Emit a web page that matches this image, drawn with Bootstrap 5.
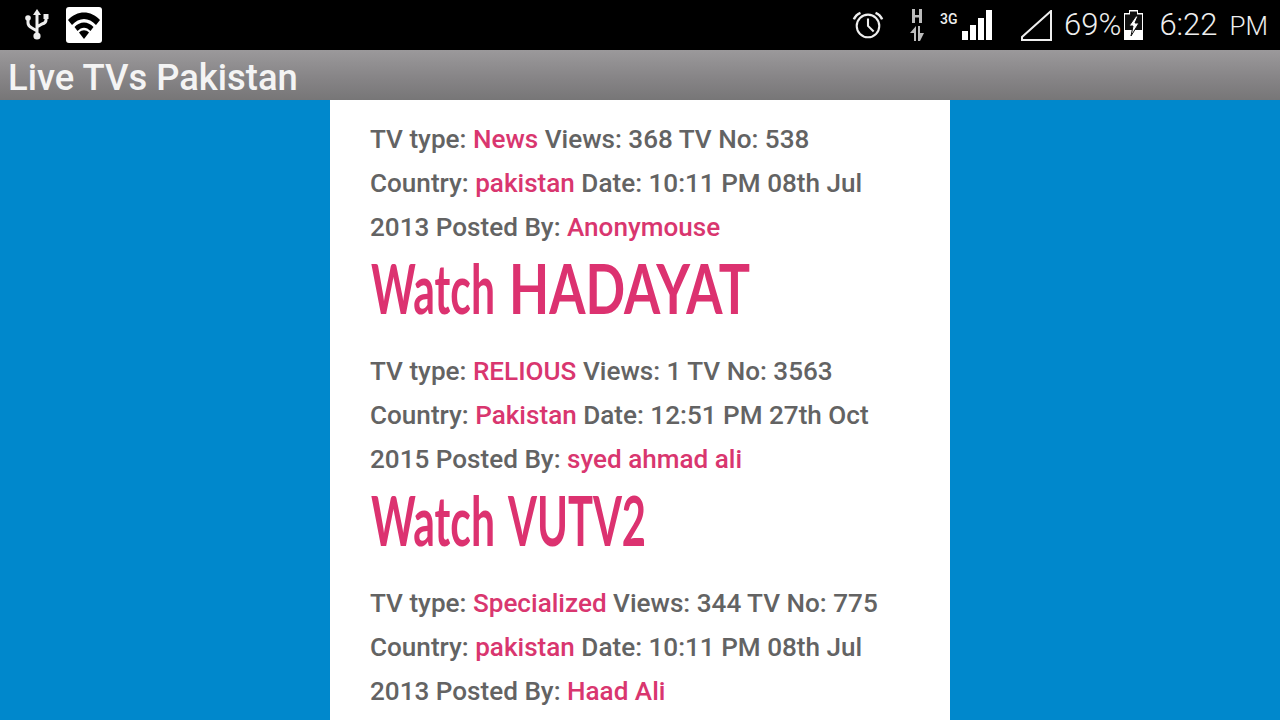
<!DOCTYPE html>
<html lang="en">
<head>
<meta charset="utf-8">
<title>Live TVs Pakistan</title>
<link href="https://cdn.jsdelivr.net/npm/bootstrap@5.3.0/dist/css/bootstrap.min.css" rel="stylesheet">
<style>
html,body{height:720px;overflow:hidden;margin:0;background:#0088cc;font-family:Roboto,"Liberation Sans",sans-serif}
.sbar{height:50px;background:#000;color:#eee;padding:0 12px 0 25px}
.sbar svg{display:block;flex:none}
.stxt{font-weight:300;font-size:31px;line-height:52px;white-space:nowrap}
.stxt small{font-size:26px;font-weight:300;margin-left:12px}
.tbar{height:50px;background:linear-gradient(#9b999b,#858385 60%,#777677);color:#f4f4f4;font-size:36.4px;font-weight:500;line-height:55px;padding-left:8px;white-space:nowrap}
.stage{height:620px;overflow:hidden;background:#0088cc}
.sheet{width:620px;height:620px;background:#fff;padding:17px 40px 0;color:#636363;font-size:26.1px;font-weight:500;line-height:44px}
.sheet p{margin:0;height:132px}
.sheet a{color:#d9366f;text-decoration:none}
.wname{height:100px;margin:0}
.wname svg{display:block}
.wname text{fill:#dc3270;font-family:Lato,"Liberation Sans",sans-serif;font-size:68px;font-weight:700}
.gap-3g{margin-left:16px}
.gap-h{margin-left:26px}
.gap-tri{margin-left:29px}
.gap-time{margin-left:15px}
.gap-pct{margin-left:12px}
.gap-batt{margin-left:2px}
.gap-wifi{margin-left:17px}
</style>
</head>
<body>
<header class="sbar d-flex align-items-center">
  <svg width="24" height="32" viewBox="0 0 24 32" fill="none" stroke="#eee" stroke-width="3"><path d="M12 4V26M3 10v4q0 3 4 5l5 3M21 8v3q0 3-4 4l-5 3"/><path d="M12 0l-4 6h8z" fill="#eee" stroke="none"/><circle cx="12" cy="27" r="3.6" fill="#eee" stroke="none"/><circle cx="3" cy="9" r="2.8" fill="#eee" stroke="none"/><rect x="18.5" y="5" width="5" height="5" fill="#eee" stroke="none"/></svg>
  <svg class="gap-wifi" width="36" height="36" viewBox="0 0 36 36"><rect width="36" height="36" rx="3" fill="#fff"/><path d="M2 13C11 3 25 3 34 13L30 18C23 10 13 10 6 18Z" fill="#000"/><path d="M8.500 20C14 14 22 14 27.500 20L24.500 24C20.500 19.500 15.500 19.500 11.500 24Z" fill="#000"/><path d="M13 25.500C16 22.500 20 22.500 23 25.500L18 32Z" fill="#000"/></svg>
  <div class="d-flex align-items-center ms-auto">
    <svg width="32" height="30" viewBox="0 0 34 30" fill="none" stroke="#eee" stroke-width="2.200"><circle cx="17" cy="16" r="12"/><path d="M17 8v8l6 6"/><path d="M2 9q2-5 7-7M32 9q-2-5-7-7" stroke-width="2.600"/></svg>
    <svg class="gap-h" width="14" height="34" viewBox="0 0 14 34" fill="#bbb"><path d="M2 1h3v6h4V1h3v14H9V9.500H5V15H2z"/><path d="M6 18v15H4v-8H0zM8 18h2v7h4l-4 8H8z"/></svg>
    <div class="gap-3g d-flex align-items-end">
      <svg width="21" height="30" viewBox="0 0 21 30"><text x="0" y="13" fill="#eee" font-family="Roboto" font-size="14" font-weight="500">3G</text></svg>
      <svg width="31" height="31" viewBox="0 0 31 31" fill="#fff"><rect x="1" y="21" width="6" height="9"/><rect x="9" y="15" width="6" height="15"/><rect x="17" y="8" width="6" height="22"/><rect x="25" y="0" width="6" height="30"/></svg>
    </div>
    <svg class="gap-tri" width="31" height="31" viewBox="0 0 31 31" fill="none" stroke="#eee" stroke-width="2"><path d="M30 1V30H1V27Z"/></svg>
    <span class="stxt gap-pct">69%</span>
    <svg class="gap-batt" width="21" height="32" viewBox="0 0 21 32"><path d="M6 1h9v3h5v27H1V4h5z" fill="#fff"/><path d="M7 2.500h7v3h5V21H2V5.500h5z" fill="#111"/><path d="M13 7L6 17h4l-2 10 8-13h-4l3-7z" fill="#fff" stroke="#111" stroke-width="1"/></svg>
    <span class="stxt gap-time">6:22<small>PM</small></span>
  </div>
</header>
<div class="tbar">Live TVs Pakistan</div>
<main class="stage d-flex justify-content-center">
  <section class="sheet">
    <p>TV type: <a href="#">News</a> Views: 368 TV No: 538 Country: <a href="#">pakistan</a> Date: 10:11 PM 08th Jul 2013 Posted By: <a href="#">Anonymouse</a></p>
    <h2 class="wname"><svg width="540" height="100" viewBox="0 0 540 100"><text x="1" y="65" textLength="124" lengthAdjust="spacingAndGlyphs">Watch</text><text x="139" y="65" textLength="241" lengthAdjust="spacingAndGlyphs">HADAYAT</text></svg></h2>
    <p>TV type: <a href="#">RELIOUS</a> Views: 1 TV No: 3563 Country: <a href="#">Pakistan</a> Date: 12:51 PM 27th Oct 2015 Posted By: <a href="#">syed ahmad ali</a></p>
    <h2 class="wname"><svg width="540" height="100" viewBox="0 0 540 100"><text x="1" y="65" textLength="124" lengthAdjust="spacingAndGlyphs">Watch</text><text x="138" y="65" textLength="138" lengthAdjust="spacingAndGlyphs">VUTV2</text></svg></h2>
    <p>TV type: <a href="#">Specialized</a> Views: 344 TV No: 775 Country: <a href="#">pakistan</a> Date: 10:11 PM 08th Jul 2013 Posted By: <a href="#">Haad Ali</a></p>
  </section>
</main>
<script src="https://cdn.jsdelivr.net/npm/bootstrap@5.3.0/dist/js/bootstrap.bundle.min.js"></script>
</body>
</html>
